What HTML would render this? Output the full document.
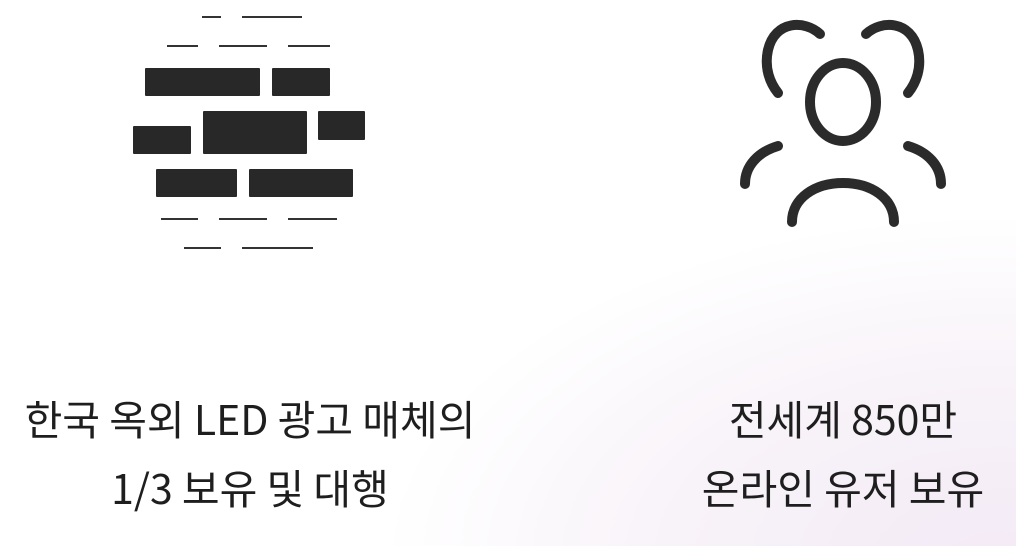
<!DOCTYPE html>
<html><head><meta charset="utf-8"><style>
html,body{margin:0;padding:0}
body{width:1016px;height:546px;overflow:hidden;position:relative;
background:radial-gradient(ellipse 750px 420px at 1000px 560px,#f3eaf5 0%,#f8f3f9 45%,#ffffff 82%);
font-family:"Liberation Sans","Noto Sans CJK KR",sans-serif;color:#222}
.t{position:absolute;top:383px;font-size:41px;line-height:69px;text-align:center;font-family:"Noto Sans CJK KR","Liberation Sans",sans-serif;white-space:nowrap;color:#1e1e1e}
svg{position:absolute;left:0;top:0}
</style></head><body>
<svg width="1016" height="546">
<g stroke="#333" stroke-width="2">
<line x1="202" y1="17" x2="221" y2="17"/><line x1="242" y1="17" x2="302" y2="17"/>
<line x1="167" y1="46" x2="198" y2="46"/><line x1="219" y1="46" x2="267" y2="46"/><line x1="288" y1="46" x2="330" y2="46"/>
<line x1="161" y1="219" x2="198" y2="219"/><line x1="219" y1="219" x2="267" y2="219"/><line x1="288" y1="219" x2="337" y2="219"/>
<line x1="184" y1="248" x2="221" y2="248"/><line x1="242" y1="248" x2="313" y2="248"/>
</g>
<g fill="#282828">
<rect x="145" y="68" width="115" height="28" rx="1"/>
<rect x="272" y="68" width="58" height="28" rx="1"/>
<rect x="133" y="126" width="58" height="28" rx="1"/>
<rect x="203" y="111" width="104" height="43" rx="1"/>
<rect x="318" y="111" width="47" height="29" rx="1"/>
<rect x="156" y="169" width="81" height="28" rx="1"/>
<rect x="249" y="169" width="104" height="28" rx="1"/>
</g>
<g fill="none" stroke="#2b2b2b" stroke-width="10" stroke-linecap="round">
<ellipse cx="843" cy="102" rx="33" ry="39"/>
<path d="M820,34 C805,20 775,20 768,50 C764,68 770,83 778,93"/>
<path d="M866,34 C881,20 911,20 918,50 C922,68 916,83 908,93"/>
<path d="M778,146 C758,152 745,166 745,184"/>
<path d="M908,146 C928,152 941,166 941,184"/>
<path d="M792,222 C792,198 815,183 843,183 C871,183 894,198 894,222"/>
</g>
</svg>
<div class="t" style="left:0;width:500px">한국 옥외 LED 광고 매체의<br>1/3 보유 및 대행</div>
<div class="t" style="left:643px;width:400px">전세계 850만<br>온라인 유저 보유</div>
</body></html>
